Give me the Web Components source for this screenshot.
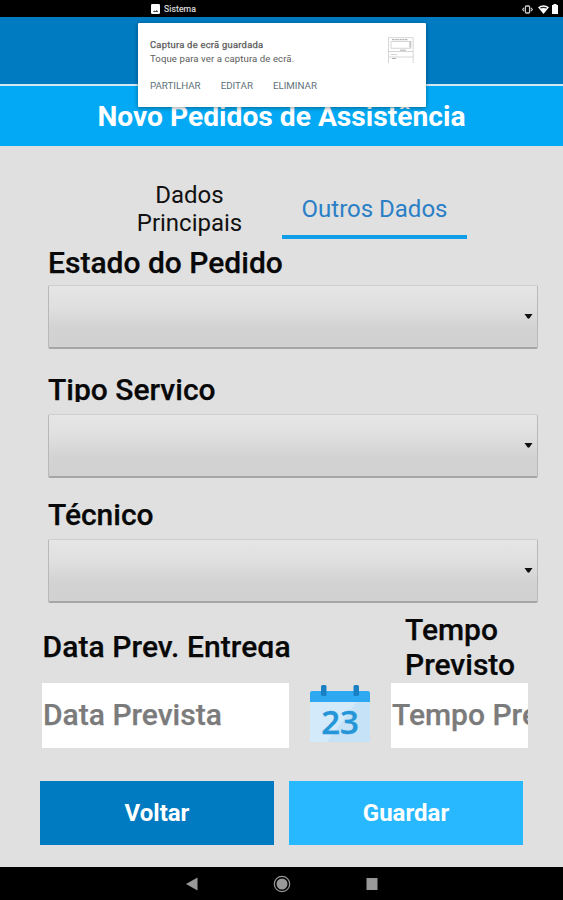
<!DOCTYPE html>
<html lang="pt">
<head>
<meta charset="utf-8">
<title>Novo Pedidos de Assistência</title>
<style>
    html, body { margin: 0; height: 100%; }
    body { font-family: Roboto, "Liberation Sans", sans-serif; background: #e0e0e0; overflow: hidden; }
</style>
</head>
<body>
<assist-screen></assist-screen>

<script>
class BaseElement extends HTMLElement {
    constructor() {
        super()
        const template = document.createElement('template')
        template.innerHTML = this.constructor.markup
        this.attachShadow({ mode: 'open' })
        this.shadowRoot.appendChild(template.content.cloneNode(true))
    }
}

class StatusBar extends BaseElement {
    static markup = `
        <style>
        :host { display: flex; align-items: center; box-sizing: border-box; height: 17px; padding: 1px 5px 0 151px; background: #000; color: #ddd; font-size: 8.6px; line-height: 10px; }
        svg { display: block; }
        span { margin-left: 4px; flex: 1; letter-spacing: .12px; -webkit-text-stroke: .2px #ddd; }
        .wifi { margin: 0 3px 0 5px; }
        </style>
        <svg width="9" height="10" viewBox="0 0 9 10"><rect width="9" height="10" rx="1.2" fill="#fff"/><path d="M1.8 8l1.5-1.6 1.1.8L5.8 6 7.2 8z" fill="#444"/></svg>
        <span>Sistema</span>
        <svg width="11" height="9" viewBox="0 0 11 9" fill="none" stroke="#ccc"><rect x="3.4" y="1" width="4.2" height="7" rx="1" stroke-width="1.3"/><path d="M2 2.8L.7 4.5 2 6.2M9 2.8l1.3 1.7L9 6.2" stroke-width="1.2"/></svg>
        <svg class="wifi" width="11" height="9" viewBox="0 0 11 9"><path d="M0 2.2Q5.5-1.6 11 2.2L5.5 9z" fill="#fff"/><path d="M2.3 3q3.2-1.4 6.4 0" stroke="#222" stroke-width="1.2" fill="none"/></svg>
        <svg width="6" height="10" viewBox="0 0 6 10"><path d="M1.5 0h3v1H6v9H0V1h1.5z" fill="#fff"/></svg>
    `
}
customElements.define('status-bar', StatusBar)

class SystemToast extends BaseElement {
    static markup = `
        <style>
        :host { display: flex; flex-direction: column; box-sizing: border-box; width: 288px; height: 84px; padding: 15px 12px 0; background: #fff; border-radius: 1px; box-shadow: 0 1px 4px rgba(0,0,0,.4); color: #5c5c5c; }
        .top { display: flex; justify-content: space-between; height: 40px; }
        .title { line-height: 13px; font-size: 9.4px; letter-spacing: .25px; -webkit-text-stroke: .25px; }
        .text { line-height: 15px; font-size: 9.6px; letter-spacing: .08px; }
        .actions { display: flex; gap: 20px; line-height: 16px; color: #607078; font-size: 9.75px; }
        svg { margin-top: -1px; }
        </style>
        <div class="top">
            <div><div class="title"><slot name="title"></slot></div><div class="text"><slot name="text"></slot></div></div>
            <svg width="26" height="26" viewBox="0 0 26 26" fill="none" stroke="#ccc" stroke-width=".8">
                <path d="M.5 26V.7h24.7V26"/><path d="M4 2.7h16" stroke="#888" stroke-dasharray="2 .6"/><path d="M3 4.5h20v6.8H3zM0 14.5h25M3 17.5h6M0 20h25"/><path d="M12 13.2h6M4 21.5h4M22 4.5v6" stroke="#999"/>
            </svg>
        </div>
        <div class="actions"><slot></slot></div>
    `
}
customElements.define('system-toast', SystemToast)

class AppHeader extends BaseElement {
    static markup = `
        <style>
        :host { display: block; }
        .brand { height: 67px; background: #007bc1; border-bottom: 2px solid #d5e9f5; }
        .title { height: 60px; line-height: 61px; text-align: center; background: #03a9f4; color: #fff; font-size: 28.2px; font-weight: 700; }
        </style>
        <div class="brand"></div>
        <div class="title"><slot></slot></div>
    `
}
customElements.define('app-header', AppHeader)

class TabItem extends BaseElement {
    static markup = `
        <style>
        :host { display: flex; align-items: center; justify-content: center; box-sizing: border-box; width: 185px; height: 62px; padding: 6px 30px 0; border-bottom: 4px solid transparent; color: #111; font-size: 24px; font-weight: 400; line-height: 28px; text-align: center; }
        :host([selected]) { padding: 5px 0 0; color: #2a7fc6; border-color: #109ee8; }
        </style>
        <span><slot></slot></span>
    `
}
customElements.define('tab-item', TabItem)

class FieldLabel extends BaseElement {
    static markup = `
        <style>
        :host { display: block; overflow: hidden; font-size: 30px; font-weight: 500; line-height: 33px; color: #080808; white-space: nowrap; -webkit-text-stroke: .25px; }
        </style>
        <slot></slot>
    `
}
customElements.define('field-label', FieldLabel)

class SpinnerBox extends BaseElement {
    static markup = `
        <style>
        :host { display: flex; align-items: center; justify-content: flex-end; box-sizing: border-box; height: 64px; padding: 0 4px 0 0; border: 1px solid #b8b8b8; border-top-color: #cfcfcf; border-bottom: 2px solid #a6a6a6; border-radius: 2px; background: linear-gradient(#e6e6e6, #dfdfdf 35%, #d3d3d3 68%, #d1d1d1); }
        </style>
        <svg width="9" height="5" viewBox="0 0 9 5"><path d="M.5 0h8L5.5 4.3q-1 .9-2 0z" fill="#111"/></svg>
    `
}
customElements.define('spinner-box', SpinnerBox)

class TextField extends BaseElement {
    static markup = `
        <style>
        :host { display: block; overflow: hidden; box-sizing: border-box; height: 65px; padding-left: 1px; line-height: 63px; background: #fff; color: #7b7b7b; font-size: 30px; font-weight: 500; white-space: nowrap; -webkit-text-stroke: .25px; }
        </style>
        <slot></slot>
    `
}
customElements.define('text-field', TextField)

class CalendarIcon extends BaseElement {
    static markup = `
        <style>
        :host { display: block; }
        svg { display: block; }
        text { font: 600 33px "Open Sans", sans-serif; stroke: #2496d8; stroke-width: .4px; }
        </style>
        <svg width="60" height="58" viewBox="0 0 60 58">
            <path d="M0 15h60v42H0z" fill="#d3eafb"/>
            <path d="M17 57L48 15h12v42z" fill="#c5e2f6"/>
            <path d="M0 8q0-2 2-2h56q2 0 2 2v9H0z" fill="#2fa8f2"/>
            <rect x="11" y="0" width="5.5" height="11" rx="1.5" fill="#1a80c4"/><rect x="43.5" y="0" width="5.5" height="11" rx="1.5" fill="#1a80c4"/>
            <text x="30" y="48.5" text-anchor="middle" fill="#2496d8">23</text>
        </svg>
    `
}
customElements.define('calendar-icon', CalendarIcon)

class AppButton extends BaseElement {
    static markup = `
        <style>
        :host { display: block; width: 234px; height: 64px; line-height: 64px; text-align: center; background: #007bc1; color: #fff; font-size: 24px; font-weight: 700; }
        :host([primary]) { background: #28b8ff; }
        </style>
        <slot></slot>
    `
}
customElements.define('app-button', AppButton)

class NavBar extends BaseElement {
    static markup = `
        <style>
        :host { display: flex; justify-content: center; align-items: center; gap: 75px; height: 33px; background: #000; }
        svg { display: block; }
        </style>
        <svg width="12" height="14" viewBox="0 0 12 14"><path d="M0 7L11.5.5v13z" fill="#999"/></svg>
        <svg width="18" height="18" viewBox="0 0 18 18"><circle cx="9" cy="9" r="7.7" fill="none" stroke="#999" stroke-width="1.2"/><circle cx="9" cy="9" r="5.5" fill="#999"/></svg>
        <svg width="12" height="14" viewBox="0 0 12 14"><path d="M.5 1h11v12H.5z" fill="#999"/></svg>
    `
}
customElements.define('nav-bar', NavBar)

class AssistScreen extends BaseElement {
    static markup = `
        <style>
        :host { display: flex; flex-direction: column; position: relative; width: 563px; height: 900px; background: #e0e0e0; }
        system-toast { position: absolute; left: 138px; top: 23px; }
        main { flex: 1; }
        .tabs { display: flex; padding: 31px 0 0 97px; }
        .group { padding: 0 25px 0 48px; }
        .first { margin-top: 7px; height: 39px; }
        .tipo { margin-top: 24px; height: 28.5px; margin-bottom: 12.5px; }
        .tecnico { margin-top: 20px; height: 41px; }
        .dates { display: grid; grid-template-columns: 247px 60px 137px; column-gap: 21px; padding-left: 42px; margin-top: 10px; align-items: end; }
        .dates field-label { align-self: start; }
        .entrega { grid-column: 1 / 3; margin-top: 17px; height: 28px; letter-spacing: .08px; padding-left: .5px; }
        .tempo { height: 63px; margin-left: 14px; margin-top: -1px; margin-bottom: 8px; line-height: 35px; }
        calendar-icon { align-self: center; margin-top: -3px; }
        .buttons { display: flex; gap: 15px; padding: 33px 0 0 40px; }
        </style>
        <status-bar></status-bar>
        <app-header>Novo Pedidos de Assistência</app-header>
        <main>
            <div class="tabs">
                <tab-item>Dados Principais</tab-item>
                <tab-item selected>Outros Dados</tab-item>
            </div>
            <div class="group">
                <field-label class="first">Estado do Pedido</field-label>
                <spinner-box></spinner-box>
                <field-label class="tipo">Tipo Servico</field-label>
                <spinner-box></spinner-box>
                <field-label class="tecnico">Técnico</field-label>
                <spinner-box></spinner-box>
            </div>
            <div class="dates">
                <field-label class="entrega">Data Prev. Entrega</field-label>
                <field-label class="tempo">Tempo<br>Previsto</field-label>
                <text-field>Data Prevista</text-field>
                <calendar-icon></calendar-icon>
                <text-field>Tempo Previsto</text-field>
            </div>
            <div class="buttons">
                <app-button>Voltar</app-button>
                <app-button primary>Guardar</app-button>
            </div>
        </main>
        <nav-bar></nav-bar>
        <system-toast>
            <span slot="title">Captura de ecrã guardada</span>
            <span slot="text">Toque para ver a captura de ecrã.</span>
            <span>PARTILHAR</span>
            <span>EDITAR</span>
            <span>ELIMINAR</span>
        </system-toast>
    `
}
customElements.define('assist-screen', AssistScreen)
</script>
</body>
</html>
